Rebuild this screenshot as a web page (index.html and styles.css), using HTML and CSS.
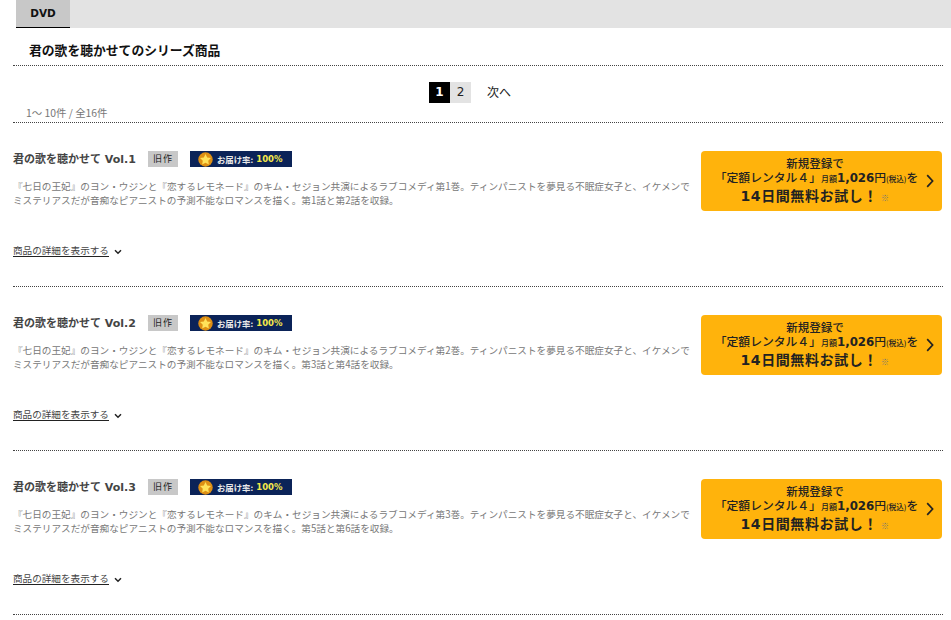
FILE: index.html
```html
<!DOCTYPE html>
<html lang="ja">
<head>
<meta charset="utf-8">
<title>君の歌を聴かせて</title>
<link rel="stylesheet" href="styles.css">
</head>
<body>
<nav class="tabs"><a class="tab">DVD</a></nav>
<div class="main">
  <h2 class="heading">君の歌を聴かせてのシリーズ商品</h2>
  <div class="pager-wrap">
    <div class="pager"><span class="pg on">1</span><span class="pg">2</span><span class="next">次へ</span></div>
    <p class="count">1～ 10件 / 全16件</p>
  </div>

  <article class="item">
    <div class="info">
      <div class="title-row">
        <h3 class="title">君の歌を聴かせて Vol.1</h3>
        <span class="badge">旧作</span>
        <span class="rate"><svg class="star" viewBox="0 0 16 16"><circle cx="8" cy="8" r="7.7" fill="#dd8f14"/><path d="M8 2.2l1.8 3.7 4 .6-2.9 2.8.7 4L8 11.4l-3.6 1.9.7-4-2.9-2.8 4-.6z" fill="#ffe25a"/></svg><span class="rate-label">お届け率:</span><b class="rate-num">100%</b></span>
      </div>
      <p class="desc">『七日の王妃』のヨン・ウジンと『恋するレモネード』のキム・セジョン共演によるラブコメディ第1巻。ティンパニストを夢見る不眠症女子と、イケメンでミステリアスだが音痴なピアニストの予測不能なロマンスを描く。第1話と第2話を収録。</p>
      <div class="more"><a class="more-link">商品の詳細を表示する</a><svg class="chev" viewBox="0 0 8 6"><path d="M1 1.2l3 3 3-3" fill="none" stroke="#222" stroke-width="1.5"/></svg></div>
    </div>
    <a class="cta">
      <span class="cta-text">
        <span class="l1">新規登録で</span>
        <span class="l2">「定額レンタル４」<small class="s1">月額</small><b class="price">1,026</b>円<small class="s2">(税込)</small>を</span>
        <span class="l3">14日間無料お試し！<small class="note">※</small></span>
      </span>
      <svg class="arrow" viewBox="0 0 8 14"><path d="M1.2 1.2L6.6 7l-5.4 5.8" fill="none" stroke="#222" stroke-width="1.7"/></svg>
    </a>
  </article>

  <article class="item">
    <div class="info">
      <div class="title-row">
        <h3 class="title">君の歌を聴かせて Vol.2</h3>
        <span class="badge">旧作</span>
        <span class="rate"><svg class="star" viewBox="0 0 16 16"><circle cx="8" cy="8" r="7.7" fill="#dd8f14"/><path d="M8 2.2l1.8 3.7 4 .6-2.9 2.8.7 4L8 11.4l-3.6 1.9.7-4-2.9-2.8 4-.6z" fill="#ffe25a"/></svg><span class="rate-label">お届け率:</span><b class="rate-num">100%</b></span>
      </div>
      <p class="desc">『七日の王妃』のヨン・ウジンと『恋するレモネード』のキム・セジョン共演によるラブコメディ第2巻。ティンパニストを夢見る不眠症女子と、イケメンでミステリアスだが音痴なピアニストの予測不能なロマンスを描く。第3話と第4話を収録。</p>
      <div class="more"><a class="more-link">商品の詳細を表示する</a><svg class="chev" viewBox="0 0 8 6"><path d="M1 1.2l3 3 3-3" fill="none" stroke="#222" stroke-width="1.5"/></svg></div>
    </div>
    <a class="cta">
      <span class="cta-text">
        <span class="l1">新規登録で</span>
        <span class="l2">「定額レンタル４」<small class="s1">月額</small><b class="price">1,026</b>円<small class="s2">(税込)</small>を</span>
        <span class="l3">14日間無料お試し！<small class="note">※</small></span>
      </span>
      <svg class="arrow" viewBox="0 0 8 14"><path d="M1.2 1.2L6.6 7l-5.4 5.8" fill="none" stroke="#222" stroke-width="1.7"/></svg>
    </a>
  </article>

  <article class="item">
    <div class="info">
      <div class="title-row">
        <h3 class="title">君の歌を聴かせて Vol.3</h3>
        <span class="badge">旧作</span>
        <span class="rate"><svg class="star" viewBox="0 0 16 16"><circle cx="8" cy="8" r="7.7" fill="#dd8f14"/><path d="M8 2.2l1.8 3.7 4 .6-2.9 2.8.7 4L8 11.4l-3.6 1.9.7-4-2.9-2.8 4-.6z" fill="#ffe25a"/></svg><span class="rate-label">お届け率:</span><b class="rate-num">100%</b></span>
      </div>
      <p class="desc">『七日の王妃』のヨン・ウジンと『恋するレモネード』のキム・セジョン共演によるラブコメディ第3巻。ティンパニストを夢見る不眠症女子と、イケメンでミステリアスだが音痴なピアニストの予測不能なロマンスを描く。第5話と第6話を収録。</p>
      <div class="more"><a class="more-link">商品の詳細を表示する</a><svg class="chev" viewBox="0 0 8 6"><path d="M1 1.2l3 3 3-3" fill="none" stroke="#222" stroke-width="1.5"/></svg></div>
    </div>
    <a class="cta">
      <span class="cta-text">
        <span class="l1">新規登録で</span>
        <span class="l2">「定額レンタル４」<small class="s1">月額</small><b class="price">1,026</b>円<small class="s2">(税込)</small>を</span>
        <span class="l3">14日間無料お試し！<small class="note">※</small></span>
      </span>
      <svg class="arrow" viewBox="0 0 8 14"><path d="M1.2 1.2L6.6 7l-5.4 5.8" fill="none" stroke="#222" stroke-width="1.7"/></svg>
    </a>
  </article>
</div>
</body>
</html>
```
FILE: styles.css
```css
* { box-sizing: border-box; }
html, body { margin: 0; padding: 0; }
body {
  width: 951px;
  height: 620px;
  overflow: hidden;
  background: #fff;
  color: #222;
  font-family: "DejaVu Sans", "Noto Sans CJK JP", sans-serif;
}
.tabs {
  margin-left: 16px;
  height: 28px;
  background: #e3e3e3;
  display: flex;
}
.tab {
  width: 54px;
  height: 28px;
  background: #c8c8c8;
  border-bottom: 1px solid #000;
  text-align: center;
  font: bold 10.5px/27px "DejaVu Sans", sans-serif;
  color: #111;
}
.main { padding: 0 8px 0 13px; }
.heading {
  margin: 0;
  height: 38px;
  padding: 13px 0 0 16px;
  font: bold 12.8px/17px "Noto Sans CJK JP", sans-serif;
  color: #111;
  border-bottom: 1px dotted #444;
}
.pager-wrap {
  height: 57px;
  border-bottom: 1px dotted #444;
  padding-top: 16px;
}
.pager {
  display: flex;
  align-items: center;
  height: 21px;
  margin-left: 416px;
  font: 12px/19px "Noto Sans CJK JP", sans-serif;
}
.pg {
  width: 21px;
  height: 21px;
  text-align: center;
  line-height: 20px;
  background: #e3e3e3;
  font-family: "DejaVu Sans", sans-serif;
}
.pg.on { background: #000; color: #fff; font-weight: bold; }
.next { margin: 0 0 2px 16px; color: #222; }
.count {
  margin: 3px 0 0 13px;
  font: 10.4px/14px "Noto Sans CJK JP", sans-serif;
  color: #777;
}
.item {
  height: 164px;
  padding-top: 28px;
  border-bottom: 1px dotted #444;
  display: flex;
  justify-content: space-between;
  align-items: flex-start;
}
.info { width: 680px; }
.title-row { display: flex; align-items: center; height: 16px; }
.title {
  margin: 0;
  width: 135px;
  padding-top: 1px;
  font: bold 11px/16px "DejaVu Sans", "Noto Sans CJK JP", sans-serif;
  color: #444;
  white-space: nowrap;
}
.badge {
  width: 30px;
  height: 16px;
  background: #c8c8c8;
  text-align: center;
  letter-spacing: 1px;
  font: 9px/16px "Noto Sans CJK JP", sans-serif;
  color: #222;
}
.rate {
  margin-left: 12px;
  width: 102px;
  height: 16px;
  background: #0b2358;
  display: flex;
  align-items: center;
  padding-left: 8px;
}
.star { width: 15px; height: 15px; flex: none; }
.rate-label {
  margin-left: 4px;
  font: bold 8.4px/16px "Noto Sans CJK JP", sans-serif;
  color: #e8e8e8;
}
.rate-num {
  margin-left: 3px;
  font: bold 8.5px/16px "DejaVu Sans", sans-serif;
  color: #f4e94a;
}
.desc {
  margin: 12px 0 0;
  font: 9.65px/14px "Noto Sans CJK JP", sans-serif;
  color: #777;
}
.more {
  margin-top: 36px;
  display: flex;
  align-items: center;
  height: 14px;
}
.more-link {
  font: 9.6px/12px "Noto Sans CJK JP", sans-serif;
  color: #444;
  border-bottom: 1px solid #222;
}
.chev { width: 8px; height: 6px; margin: 3px 0 0 5px; }
.cta {
  width: 241px;
  height: 60px;
  margin-right: 1px;
  background: #ffb30c;
  border-radius: 4px;
  display: flex;
  align-items: center;
}
.cta-text {
  flex: 1;
  padding-left: 3px;
  text-align: center;
  font-family: "Noto Sans CJK JP", sans-serif;
  color: #222;
}
.cta-text span { display: block; white-space: nowrap; }
.l1 { font-size: 11.5px; line-height: 14px; font-weight: 500; }
.l2 { font-size: 11.8px; line-height: 14px; font-weight: 500; padding-left: 3px; }
.l3 { font-size: 14px; line-height: 20px; font-weight: 700; letter-spacing: 0.6px; font-family: "DejaVu Sans", "Noto Sans CJK JP", sans-serif; }
.s1 { font-size: 8px; }
.s2 { font-size: 7.5px; }
.price { font: bold 11.8px "DejaVu Sans", sans-serif; }
.note { font: 8px "Noto Sans CJK JP", sans-serif; color: #777; margin-left: 3px; }
.arrow { width: 8px; height: 14px; margin-right: 8px; flex: none; }
```
